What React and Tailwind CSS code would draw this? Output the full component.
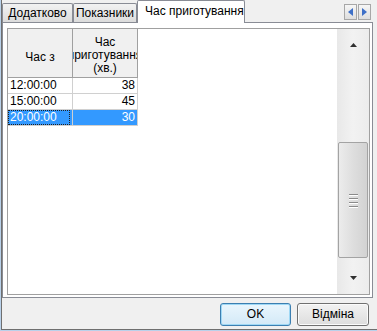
const rows = [
  { from: '12:00:00', mins: 38 },
  { from: '15:00:00', mins: 45 },
  { from: '20:00:00', mins: 30, selected: true },
];

const TabButton = ({ label, width }) => (
  <div
    className={`h-[19px] ${width} border border-b-0 border-[#898c95] rounded-t-[2px] bg-gradient-to-b from-[#f2f2f2] to-[#dcdcdc] flex items-center justify-center text-black`}
  >
    {label}
  </div>
);

const ScrollArrow = ({ dir }) => (
  <svg width="7" height="4" viewBox="0 0 7 4">
    {dir === 'up' ? <path d="M3.5 0 L7 4 L0 4 Z" fill="#303030" /> : <path d="M0 0 L7 0 L3.5 4 Z" fill="#303030" />}
  </svg>
);

const TabArrow = ({ dir }) => (
  <div className="w-[13px] h-[16px] border border-[#a7a7a7] bg-gradient-to-b from-[#f6f6f6] to-[#dedede] flex items-center justify-center">
    <svg width="5" height="8" viewBox="0 0 5 8">
      {dir === 'left' ? <path d="M5 0 L0 4 L5 8 Z" fill="#3d6fc7" /> : <path d="M0 0 L5 4 L0 8 Z" fill="#3d6fc7" />}
    </svg>
  </div>
);

export default function App() {
  return (
    <div
      className="w-[377px] h-[331px] bg-[#f0f0f0] border-l border-b border-[#b9d1ea] text-[12px] leading-[13px]"
      style={{ fontFamily: '"Liberation Sans", Arial, sans-serif' }}
    >
      <div className="h-full border-l border-b border-[#6f6f6f] flex flex-col">
        {/* tab strip */}
        <div className="h-[22px] shrink-0 flex items-end">
          <TabButton label="Додатково" width="w-[71px]" />
          <TabButton label="Показники" width="w-[64px]" />
          <div className="relative z-10 -mb-px w-[108px] h-[23px] border border-b-0 border-[#898c95] rounded-t-[2px] bg-white flex items-center pl-[7px] pb-[2px] text-black">
            Час приготування
          </div>
          <div className="ml-auto mr-[6px] mb-[2px] flex gap-px">
            <TabArrow dir="left" />
            <TabArrow dir="right" />
          </div>
        </div>

        {/* tab panel */}
        <div className="w-[371px] h-[276px] shrink-0 border border-[#898c95] bg-white pt-[5px] pl-[4px]">
          <div className="w-[363px] h-[267px] border border-[#a0a0a0] flex">
            <div className="flex-1">
              <div className="flex h-[49px] border-b border-[#a0a0a0] w-[130px] bg-[#f0f0f0]">
                <div className="w-[65px] border-r border-[#a0a0a0] flex items-center justify-center pt-[9px]">
                  Час з
                </div>
                <div className="w-[65px] border-r border-[#a0a0a0] flex flex-col items-center justify-center overflow-hidden whitespace-nowrap pt-[4px]">
                  <span>Час</span>
                  <span>приготування</span>
                  <span>(хв.)</span>
                </div>
              </div>
              {rows.map((r) => (
                <div key={r.from} className="flex h-[16px] w-[130px]">
                  <div
                    className={`w-[65px] border-b border-r flex items-center pl-[2px] ${
                      r.selected
                        ? 'bg-[#3399ff] text-white border-[#d0d0d0]'
                        : 'border-[#d0d0d0] text-black'
                    }`}
                  >
                    <div
                      className={`h-full w-full flex items-center ${
                        r.selected ? 'border border-dotted border-[#202020] -ml-[2px] pl-[1px]' : ''
                      }`}
                    >
                      {r.from}
                    </div>
                  </div>
                  <div
                    className={`w-[65px] border-b border-r border-[#d0d0d0] flex items-center justify-end pr-[2px] ${
                      r.selected ? 'bg-[#3399ff] text-white' : 'text-black'
                    }`}
                  >
                    {r.mins}
                  </div>
                </div>
              ))}
            </div>

            {/* scrollbar */}
            <div className="w-[32px] h-full bg-gradient-to-r from-[#e8e8e8] via-[#f2f2f2] to-[#ececec] flex flex-col">
              <div className="h-[32px] flex items-center justify-center">
                <ScrollArrow dir="up" />
              </div>
              <div className="h-[81px]" />
              <div className="h-[116px] mx-px border border-[#a3a3a3] rounded-[2px] bg-gradient-to-r from-[#ececec] via-[#dedede] to-[#d2d2d2] flex items-center justify-center">
                <div className="flex flex-col gap-[2px]">
                  <div className="w-[9px] h-px bg-[#8a8a8a] shadow-[0_1px_0_#ffffff]" />
                  <div className="w-[9px] h-px bg-[#8a8a8a] shadow-[0_1px_0_#ffffff] mt-px" />
                  <div className="w-[9px] h-px bg-[#8a8a8a] shadow-[0_1px_0_#ffffff] mt-px" />
                  <div className="w-[9px] h-px bg-[#8a8a8a] shadow-[0_1px_0_#ffffff] mt-px" />
                </div>
              </div>
              <div className="flex-1 flex items-center justify-center pt-[3px]">
                <ScrollArrow dir="down" />
              </div>
            </div>
          </div>
        </div>

        {/* dialog buttons */}
        <div className="flex justify-end gap-[6px] pt-[5px] pr-[8px]">
          <button className="w-[71px] h-[23px] rounded-[3px] border border-[#3c7fb1] bg-gradient-to-b from-[#eaf6fd] to-[#d3e9f7] shadow-[inset_0_0_0_1px_#9fd8f5] text-black">
            OK
          </button>
          <button className="w-[72px] h-[23px] rounded-[3px] border border-[#707070] bg-gradient-to-b from-[#f2f2f2] to-[#dddddd] shadow-[inset_0_0_0_1px_#fbfbfb] text-black">
            Відміна
          </button>
        </div>
      </div>
    </div>
  );
}
